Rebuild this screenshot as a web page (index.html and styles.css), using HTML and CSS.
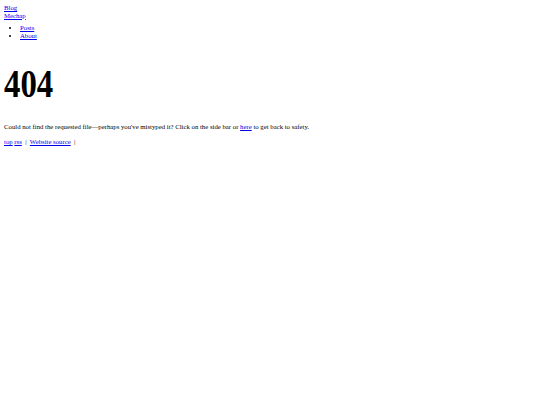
FILE: index.html
```html
<!DOCTYPE html>
<html>
<head>
<meta charset="utf-8">
<link rel="stylesheet" href="styles.css">
</head>
<body>
<header class="site-header">
  <a class="brand" href="#">Blog</a><br>
  <a class="brand" href="#">Mechap</a>
  <ul class="nav">
    <li><a href="#">Posts</a></li>
    <li><a href="#">About</a></li>
  </ul>
</header>
<main>
  <h1 class="title"><span class="title-text">404</span></h1>
  <p class="message">Could not find the requested file—perhaps you've mistyped it? Click on the side bar or <a href="#">here</a> to get back to safety.</p>
</main>
<footer class="footer">
  <a href="#">top</a> <a href="#">rss</a> &nbsp;|&nbsp; <a href="#">Website source</a> &nbsp;|
</footer>
</body>
</html>
```
FILE: styles.css
```css
html, body {
  background: #fff;
}
body {
  margin: 4px;
  font-family: "Liberation Serif", "Times New Roman", serif;
  font-size: 6.75px;
  line-height: 7.75px;
  color: #000;
}
a {
  color: #0000ee;
}
.nav {
  margin: 4.5px 0;
  padding-left: 16px;
}
.title {
  font-size: 41px;
  line-height: 48px;
  margin: 19.5px 0 16px;
  font-weight: bold;
}
.title-text {
  display: inline-block;
  transform: scaleX(0.8);
  transform-origin: left center;
}
.message {
  margin: 0 0 7.25px;
}
.footer {
  margin: 0;
}
```
